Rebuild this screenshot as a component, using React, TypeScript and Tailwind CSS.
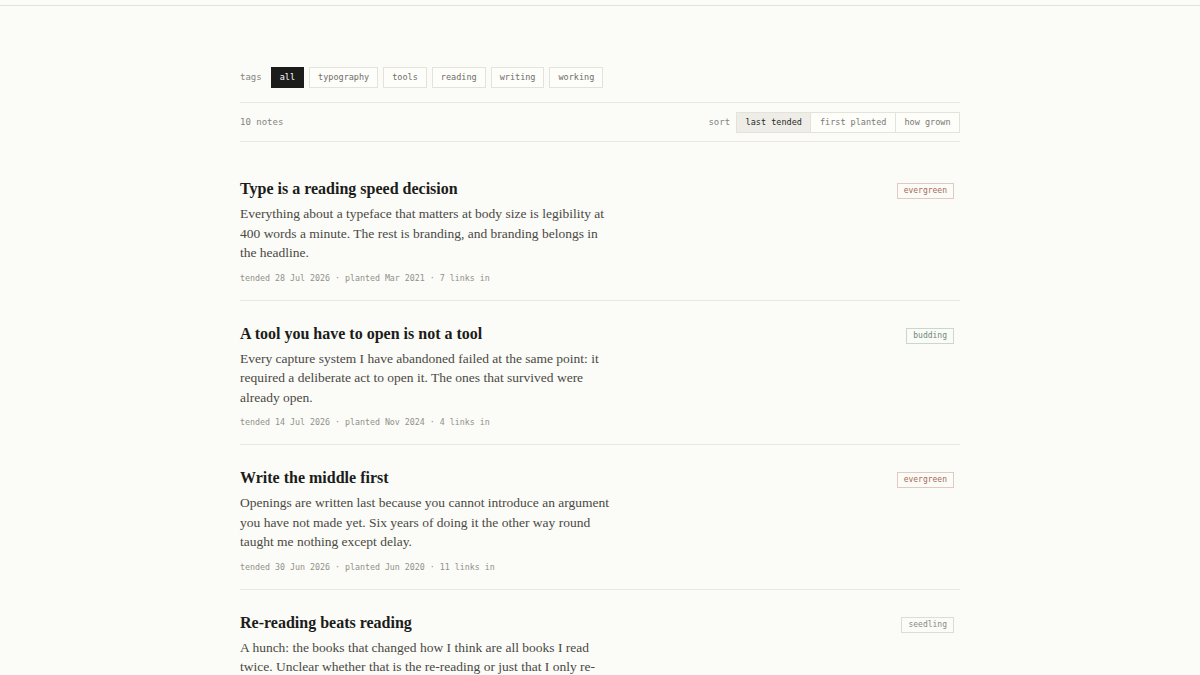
import { useState } from "react";

type Stage = "evergreen" | "budding" | "seedling";

type Note = {
  title: string;
  body: string;
  tended: string;
  planted: string;
  links: number;
  stage: Stage;
};

const notes: Note[] = [
  {
    title: "Type is a reading speed decision",
    body: "Everything about a typeface that matters at body size is legibility at 400 words a minute. The rest is branding, and branding belongs in the headline.",
    tended: "28 Jul 2026",
    planted: "Mar 2021",
    links: 7,
    stage: "evergreen",
  },
  {
    title: "A tool you have to open is not a tool",
    body: "Every capture system I have abandoned failed at the same point: it required a deliberate act to open it. The ones that survived were already open.",
    tended: "14 Jul 2026",
    planted: "Nov 2024",
    links: 4,
    stage: "budding",
  },
  {
    title: "Write the middle first",
    body: "Openings are written last because you cannot introduce an argument you have not made yet. Six years of doing it the other way round taught me nothing except delay.",
    tended: "30 Jun 2026",
    planted: "Jun 2020",
    links: 11,
    stage: "evergreen",
  },
  {
    title: "Re-reading beats reading",
    body: "A hunch: the books that changed how I think are all books I read twice. Unclear whether that is the re-reading or just that I only re-read the ones that were already working on me.",
    tended: "22 Jun 2026",
    planted: "Feb 2026",
    links: 2,
    stage: "seedling",
  },
];

const tags = ["all", "typography", "tools", "reading", "writing", "working"];
const sorts = ["last tended", "first planted", "how grown"];

const stageStyle: Record<Stage, string> = {
  evergreen: "text-[#a86a55] border-[#e3c9bf]",
  budding: "text-[#6b8a78] border-[#c8d8cd]",
  seedling: "text-[#8a8a84] border-[#dcdcd6]",
};

const mono = "font-['DejaVu_Sans_Mono',monospace]";
const serif = "font-['Liberation_Serif',serif]";

export default function App() {
  const [tag, setTag] = useState("all");
  const [sort, setSort] = useState("last tended");

  return (
    <div className="min-h-screen bg-[#fbfbf7] text-[#1f1f1c]">
      {/* header edge */}
      <div className="h-[6px] border-b border-[#e2e1da]" />

      <main className="w-[720px] mx-auto pt-[61px]">
        {/* tag filter */}
        <div className={`flex items-center gap-[5px] pb-[14px] border-b border-[#e8e7e0] ${mono} text-[8.5px]`}>
          <span className="text-[#85847e] text-[9px] mr-[4px]">tags</span>
          {tags.map((t) => (
            <button
              key={t}
              onClick={() => setTag(t)}
              className={`h-[21px] px-[8px] border ${
                tag === t
                  ? "bg-[#1c1c1a] border-[#1c1c1a] text-white"
                  : "bg-[#fdfdfa] border-[#e3e2db] text-[#6f6e68]"
              }`}
            >
              {t}
            </button>
          ))}
        </div>

        {/* count + sort */}
        <div className={`flex items-center justify-between pt-[9px] pb-[8px] border-b border-[#e8e7e0] ${mono} text-[8.5px]`}>
          <span className="text-[#85847e] text-[9px]">10 notes</span>
          <div className="flex items-center">
            <span className="text-[#85847e] text-[9px] mr-[6px]">sort</span>
            <div className="flex border border-[#e3e2db]">
              {sorts.map((s) => (
                <button
                  key={s}
                  onClick={() => setSort(s)}
                  className={`h-[19px] px-[8.5px] border-l first:border-l-0 border-[#e3e2db] ${
                    sort === s ? "bg-[#eeede7] text-[#2a2a27]" : "bg-[#fdfdfa] text-[#7a7973]"
                  }`}
                >
                  {s}
                </button>
              ))}
            </div>
          </div>
        </div>

        {/* notes */}
        <ul className="mt-[14px]">
          {notes.map((n) => (
            <li key={n.title} className="flex justify-between pt-[21px] pb-[16px] border-b border-[#e8e7e0]">
              <div>
                <h2 className={`${serif} font-bold text-[16px] leading-[24px] text-[#1c1c1a]`}>{n.title}</h2>
                <p className={`${serif} mt-[3px] max-w-[370px] text-[13.5px] leading-[19.5px] text-[#4a4944]`}>
                  {n.body}
                </p>
                <div className={`${mono} mt-[9px] text-[8.3px] leading-[12px] text-[#92918b]`}>
                  tended {n.tended} · planted {n.planted} · {n.links} links in
                </div>
              </div>
              <div className="pt-[6px] pr-[6px]">
                <span className={`${mono} block h-[16px] px-[6px] border text-[8px] leading-[14px] ${stageStyle[n.stage]}`}>
                  {n.stage}
                </span>
              </div>
            </li>
          ))}
        </ul>
      </main>
    </div>
  );
}
